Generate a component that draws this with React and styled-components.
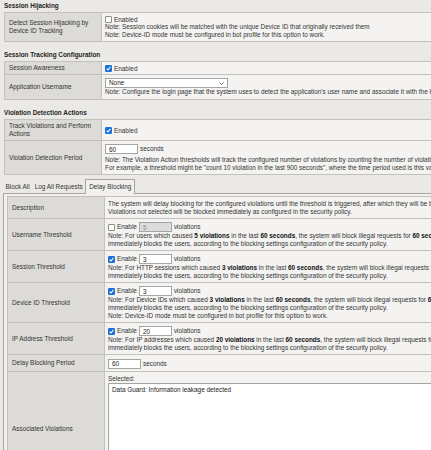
import React from 'react'
import styled, { createGlobalStyle } from 'styled-components'

const GlobalStyle = createGlobalStyle`
  html, body {
    margin: 0;
    padding: 0;
    overflow: hidden;
    background: #ebe9e5;
  }
  body {
    font-family: "Liberation Sans", Arial, sans-serif;
    font-size: 6.4px;
    color: #2a2a2a;
  }
`

const Page = styled.div`
  width: 760px;
  padding: 2px 0 0 4px;
`

const Heading = styled.div`
  font-weight: bold;
  line-height: 8px;
  height: 8px;
  color: #1e1e1e;
  margin: ${p => (p.first ? '0 0 2px' : '9px 0 2px')};
`

const FormTable = styled.table`
  border-collapse: collapse;
  width: 100%;
  border: 1px solid #aeaca8;
`

const Label = styled.td`
  width: 88px;
  padding: 2px 4px;
  background: #dddbd7;
  border: 1px solid #c3c1bd;
  line-height: 8px;
  vertical-align: middle;
  color: #333;
`

const Value = styled.td`
  padding: 3px 3px ${p => p.bottom ?? 2}px;
  background: #f4f3f1;
  border: 1px solid #c3c1bd;
  vertical-align: ${p => (p.middle ? 'middle' : 'top')};
  line-height: 8px;
  white-space: nowrap;
  color: #333;
`

const Line = styled.div`
  height: 8px;
  line-height: 8px;
  white-space: nowrap;
  b {
    color: #111;
  }
`

const ControlLine = styled.div`
  display: flex;
  align-items: center;
  gap: 2px;
  height: ${p => p.h || 7}px;
  margin-bottom: ${p => p.gap || 0}px;
`

const Box = styled.span`
  box-sizing: border-box;
  width: 7px;
  height: 7px;
  border-radius: 1px;
  display: inline-flex;
  align-items: center;
  justify-content: center;
  border: 1px solid ${p => (p.checked ? '#1b6fd8' : '#8d8d8d')};
  background: ${p => (p.checked ? '#1b6fd8' : '#fff')};
  svg {
    display: block;
  }
`

const Field = styled.input`
  box-sizing: border-box;
  width: 33px;
  height: 10px;
  margin: 0;
  padding: 0 3px;
  border: 1px solid #a4a4a4;
  background: ${p => (p.disabled ? '#dcdcdc' : '#fff')};
  color: ${p => (p.disabled ? '#8a8a8a' : '#222')};
  font: inherit;
  outline: none;
`

const Select = styled.div`
  box-sizing: border-box;
  width: 123px;
  height: 10px;
  border: 1px solid #a4a4a4;
  background: #fff;
  display: flex;
  align-items: center;
  justify-content: space-between;
  padding: 0 3px;
  color: #222;
`

const TabBar = styled.div`
  display: flex;
  align-items: flex-end;
  height: 15px;
  margin: 3px 0 0 -1px;
`

const Tab = styled.div`
  line-height: 13px;
  padding: 0 ${p => (p.active ? 3 : 2.5)}px;
  color: #333;
  ${p =>
    p.active &&
    `
    background: #f1f0ee;
    border: 1px solid #a8a6a2;
    border-bottom: none;
    line-height: 14px;
    margin-bottom: -1px;
    position: relative;
    z-index: 1;
  `}
`

const Panel = styled.div`
  margin-left: -1px;
  border: 1px solid #a8a6a2;
  background: #f1f0ee;
  padding: 2px 0 0 3px;
`

const ListBox = styled.div`
  box-sizing: border-box;
  height: 100px;
  border: 1px solid #a4a4a4;
  background: #fff;
  padding: 2px 3px;
  line-height: 8px;
  color: #222;
`

const Check = ({ checked }) => (
  <Box checked={checked}>
    {checked && (
      <svg width="5" height="5" viewBox="0 0 5 5">
        <polyline points="0.6,2.6 2,4 4.4,0.9" fill="none" stroke="#fff" strokeWidth="1.1" />
      </svg>
    )}
  </Box>
)

const Chevron = () => (
  <svg width="5" height="3" viewBox="0 0 5 3">
    <polyline points="0.5,0.5 2.5,2.5 4.5,0.5" fill="none" stroke="#444" strokeWidth="0.8" />
  </svg>
)

const Threshold = ({ checked, value, lines }) => (
  <>
    <ControlLine h={10}>
      <Check checked={checked} />
      <span>Enable</span>
      <Field readOnly disabled={!checked} value={value} />
      <span>violations</span>
    </ControlLine>
    {lines.map((l, i) => (
      <Line key={i}>{l}</Line>
    ))}
  </>
)

const users = 'immediately blocks the users, according to the blocking settings configuration of the security policy.'

export default function App() {
  return (
    <Page>
      <GlobalStyle />
      <Heading first>Session Hijacking</Heading>
      <FormTable>
        <tbody>
          <tr>
            <Label>Detect Session Hijacking by<br />Device ID Tracking</Label>
            <Value>
              <ControlLine>
                <Check />
                <span>Enabled</span>
              </ControlLine>
              <Line>Note: Session cookies will be matched with the unique Device ID that originally received them</Line>
              <Line>Note: Device-ID mode must be configured in bot profile for this option to work.</Line>
            </Value>
          </tr>
        </tbody>
      </FormTable>

      <Heading>Session Tracking Configuration</Heading>
      <FormTable>
        <tbody>
          <tr>
            <Label>Session Awareness</Label>
            <Value>
              <ControlLine>
                <Check checked />
                <span>Enabled</span>
              </ControlLine>
            </Value>
          </tr>
          <tr>
            <Label>Application Username</Label>
            <Value bottom={3}>
              <ControlLine h={10}>
                <Select>
                  <span>None</span>
                  <Chevron />
                </Select>
              </ControlLine>
              <Line>Note: Configure the login page that the system uses to detect the application's user name and associate it with the HTTP session.</Line>
            </Value>
          </tr>
        </tbody>
      </FormTable>

      <Heading>Violation Detection Actions</Heading>
      <FormTable>
        <tbody>
          <tr>
            <Label>Track Violations and Perform<br />Actions</Label>
            <Value middle>
              <ControlLine>
                <Check checked />
                <span>Enabled</span>
              </ControlLine>
            </Value>
          </tr>
          <tr>
            <Label>Violation Detection Period</Label>
            <Value>
              <ControlLine h={10} gap={2}>
                <Field readOnly value="60" />
                <span>seconds</span>
              </ControlLine>
              <Line>Note: The Violation Action thresholds will track the configured number of violations by counting the number of violations in the defined period.</Line>
              <Line>For example, a threshold might be "count 10 violation in the last 900 seconds", where the time period used is this value.</Line>
            </Value>
          </tr>
        </tbody>
      </FormTable>

      <TabBar>
        <Tab>Block All</Tab>
        <Tab>Log All Requests</Tab>
        <Tab active>Delay Blocking</Tab>
      </TabBar>
      <Panel>
        <FormTable>
          <tbody>
            <tr>
              <Label>Description</Label>
              <Value>
                <Line>The system will delay blocking for the configured violations until the threshold is triggered, after which they will be blocked.</Line>
                <Line>Violations not selected will be blocked immediately as configured in the security policy.</Line>
              </Value>
            </tr>
            <tr>
              <Label>Username Threshold</Label>
              <Value>
                <Threshold
                  value="5"
                  lines={[
                    <>Note: For users which caused <b>5 violations</b> in the last <b>60 seconds</b>, the system will block illegal requests for <b>60 seconds</b>, and then</>,
                    users,
                  ]}
                />
              </Value>
            </tr>
            <tr>
              <Label>Session Threshold</Label>
              <Value>
                <Threshold
                  checked
                  value="3"
                  lines={[
                    <>Note: For HTTP sessions which caused <b>3 violations</b> in the last <b>60 seconds</b>, the system will block illegal requests for <b>60 seconds</b>, and then</>,
                    users,
                  ]}
                />
              </Value>
            </tr>
            <tr>
              <Label>Device ID Threshold</Label>
              <Value>
                <Threshold
                  checked
                  value="3"
                  lines={[
                    <>Note: For Device IDs which caused <b>3 violations</b> in the last <b>60 seconds</b>, the system will block illegal requests for <b>60 seconds</b>, and then</>,
                    users,
                    'Note: Device-ID mode must be configured in bot profile for this option to work.',
                  ]}
                />
              </Value>
            </tr>
            <tr>
              <Label>IP Address Threshold</Label>
              <Value>
                <Threshold
                  checked
                  value="20"
                  lines={[
                    <>Note: For IP addresses which caused <b>20 violations</b> in the last <b>60 seconds</b>, the system will block illegal requests for <b>60 seconds</b>, and then</>,
                    users,
                  ]}
                />
              </Value>
            </tr>
            <tr>
              <Label>Delay Blocking Period</Label>
              <Value>
                <ControlLine h={11}>
                  <Field readOnly value="60" />
                  <span>seconds</span>
                </ControlLine>
              </Value>
            </tr>
            <tr>
              <Label>Associated Violations</Label>
              <Value>
                <Line>Selected:</Line>
                <ListBox>Data Guard: Information leakage detected</ListBox>
              </Value>
            </tr>
          </tbody>
        </FormTable>
      </Panel>
    </Page>
  )
}
